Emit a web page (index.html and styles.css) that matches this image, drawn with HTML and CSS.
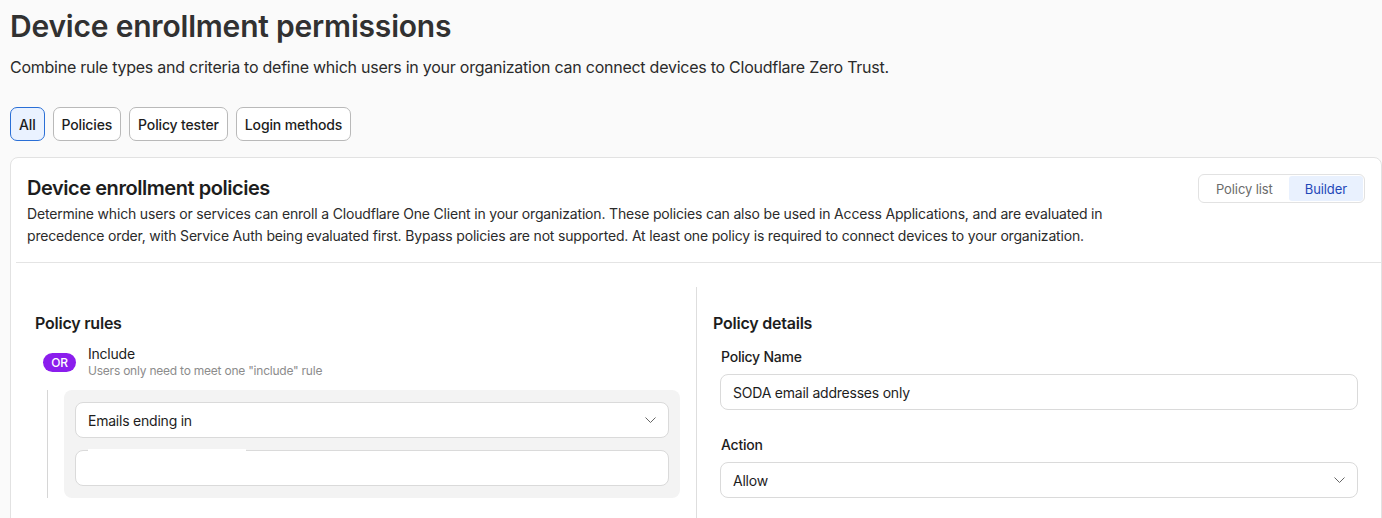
FILE: index.html
```html
<!DOCTYPE html>
<html lang="en">
<head>
    <meta charset="UTF-8">
    <meta name="viewport" content="width=device-width, initial-scale=1.0">
    <title>Device enrollment permissions</title>
    <link rel="stylesheet" href="styles.css">
</head>
<body>
    <h1 class="page-title">Device enrollment permissions</h1>
    <p class="page-sub">Combine rule types and criteria to define which users in your organization can connect devices to Cloudflare Zero Trust.</p>

    <div class="tabs">
        <button class="tab active">All</button>
        <button class="tab">Policies</button>
        <button class="tab">Policy tester</button>
        <button class="tab">Login methods</button>
    </div>

    <div class="card">
        <div class="card-head">
            <div class="head-text">
                <h2 class="card-title">Device enrollment policies</h2>
                <p class="card-desc">Determine which users or services can enroll a Cloudflare One Client in your organization. These policies can also be used in Access Applications, and are evaluated in precedence order, with Service Auth being evaluated first. Bypass policies are not supported. At least one policy is required to connect devices to your organization.</p>
            </div>
            <div class="segment">
                <button class="seg">Policy list</button>
                <button class="seg on">Builder</button>
            </div>
        </div>

        <div class="card-body">
            <div class="col rules">
                <h3 class="col-title">Policy rules</h3>
                <div class="rule-head">
                    <span class="badge">OR</span>
                    <div>
                        <div class="rule-name">Include</div>
                        <div class="rule-hint">Users only need to meet one "include" rule</div>
                    </div>
                </div>
                <div class="rule-group">
                    <div class="rule-box">
                        <div class="field select">
                            <span>Emails ending in</span>
                            <svg class="chev" width="11" height="6" viewBox="0 0 11 6"><path d="M0.5 0.5l5 5 5-5" fill="none" stroke="#666" stroke-width="1"/></svg>
                        </div>
                        <div class="field blank"><span class="redact"></span></div>
                    </div>
                </div>
            </div>

            <div class="col details">
                <h3 class="col-title">Policy details</h3>
                <div class="form">
                    <label class="label">Policy Name</label>
                    <div class="field">SODA email addresses only</div>
                    <label class="label gap">Action</label>
                    <div class="field select">
                        <span>Allow</span>
                        <svg class="chev" width="11" height="6" viewBox="0 0 11 6"><path d="M0.5 0.5l5 5 5-5" fill="none" stroke="#666" stroke-width="1"/></svg>
                    </div>
                </div>
            </div>
        </div>
    </div>
</body>
</html>
```

FILE: styles.css
```css
* {
    box-sizing: border-box;
}
body {
    margin: 0;
    padding: 0 0 0 10px;
    background: #fafafa;
    font-family: Inter, "Noto Sans", sans-serif;
    color: #1d1d1d;
    letter-spacing: -0.014em;
    overflow: hidden;
}
.page-title {
    margin: 8px 0 0 0;
    font-size: 30px;
    line-height: 36px;
    font-weight: 600;
    color: #313131;
    letter-spacing: -0.2px;
}
.page-sub {
    margin: 11px 0 0 0;
    font-size: 16px;
    line-height: 24px;
    color: #2b2b2b;
    letter-spacing: -0.25px;
}
.tabs {
    display: flex;
    gap: 8px;
    margin-top: 28px;
}
.tab {
    height: 34px;
    padding: 0 8px;
    font-family: inherit;
    font-size: 14px;
    font-weight: 500;
    letter-spacing: -0.15px;
    color: #1d1d1d;
    background: #fff;
    border: 1px solid #b9b9b9;
    border-radius: 7px;
}
.tab.active {
    background: #eaf2ff;
    border-color: #2a6fd6;
}
.card {
    display: flex;
    flex-direction: column;
    margin-top: 16px;
    background: #fff;
    border: 1px solid #e2e2e2;
    border-radius: 8px;
    height: 400px;
}
.card-head {
    display: flex;
    justify-content: space-between;
    align-items: flex-start;
    padding: 16px 16px 15px 11px;
    margin-left: 5px;
    border-bottom: 1px solid #e4e4e4;
}
.card-title {
    margin: 0;
    font-size: 20px;
    line-height: 28px;
    font-weight: 600;
    letter-spacing: -0.45px;
}
.card-desc {
    margin: 1px 0 0 0;
    max-width: 1100px;
    font-size: 14px;
    line-height: 22px;
    color: #2b2b2b;
    letter-spacing: -0.18px;
}
.segment {
    display: flex;
    height: 29px;
    padding: 1px;
    border: 1px solid #e2e2e2;
    border-radius: 6px;
    flex-shrink: 0;
}
.seg {
    padding: 0 16px;
    font-family: inherit;
    font-size: 13px;
    letter-spacing: -0.1px;
    color: #6b6b6b;
    background: none;
    border: none;
    border-radius: 3px;
}
.seg.on {
    background: #e9f1fe;
    color: #1f48b8;
}
.card-body {
    flex: 1;
    display: flex;
    margin-top: 24px;
}
.col {
    padding-top: 24px;
}
.rules {
    width: 686px;
    padding-left: 24px;
    padding-right: 16px;
    border-right: 1px solid #dedede;
}
.details {
    flex: 1;
    padding-left: 16px;
    padding-right: 23px;
}
.col-title {
    margin: 0;
    font-size: 16px;
    line-height: 24px;
    font-weight: 600;
}
.rule-head {
    display: flex;
    align-items: flex-start;
    gap: 12px;
    margin-top: 10px;
    padding-left: 8px;
}
.badge {
    margin-top: 8px;
    width: 33px;
    height: 19px;
    border-radius: 10px;
    background: #8b1ded;
    color: #fff;
    font-size: 12px;
    font-weight: 500;
    display: flex;
    align-items: center;
    justify-content: center;
}
.rule-name {
    font-size: 14px;
    line-height: 18px;
    color: #1d1d1d;
}
.rule-hint {
    font-size: 12px;
    line-height: 16px;
    color: #8c8c8c;
}
.rule-group {
    margin-top: 11px;
    margin-left: 12px;
    padding-left: 16px;
    border-left: 1px solid #d6d6d6;
}
.rule-box {
    display: flex;
    flex-direction: column;
    gap: 12px;
    padding: 12px 11px;
    background: #f3f3f3;
    border-radius: 8px;
}
.field {
    position: relative;
    height: 36px;
    display: flex;
    align-items: center;
    justify-content: space-between;
    padding: 0 12px 0 12px;
    background: #fff;
    border: 1px solid #dadada;
    border-radius: 8px;
    font-size: 14px;
    color: #1d1d1d;
}
.redact {
    position: absolute;
    top: -2px;
    left: 12px;
    width: 158px;
    height: 3px;
    background: #fff;
}
.form {
    padding-left: 7px;
}
.label {
    display: block;
    margin-top: 12px;
    margin-bottom: 7px;
    font-size: 14px;
    line-height: 20px;
    font-weight: 500;
    padding-left: 1px;
}
.label.gap {
    margin-top: 25px;
}
```
